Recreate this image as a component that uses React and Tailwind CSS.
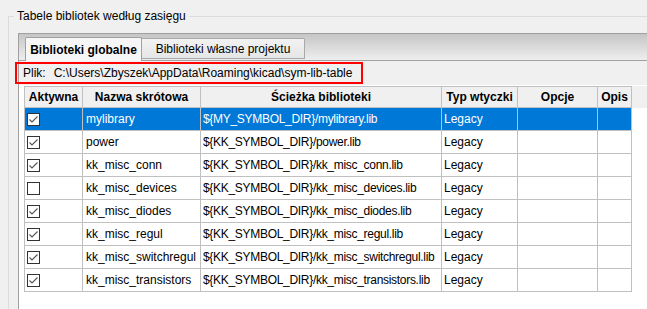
import React from 'react';

const rows = [
  { on: true, name: 'mylibrary', path: '${MY_SYMBOL_DIR}/mylibrary.lib', sel: true },
  { on: true, name: 'power', path: '${KK_SYMBOL_DIR}/power.lib' },
  { on: true, name: 'kk_misc_conn', path: '${KK_SYMBOL_DIR}/kk_misc_conn.lib' },
  { on: false, name: 'kk_misc_devices', path: '${KK_SYMBOL_DIR}/kk_misc_devices.lib' },
  { on: true, name: 'kk_misc_diodes', path: '${KK_SYMBOL_DIR}/kk_misc_diodes.lib' },
  { on: true, name: 'kk_misc_regul', path: '${KK_SYMBOL_DIR}/kk_misc_regul.lib' },
  { on: true, name: 'kk_misc_switchregul', path: '${KK_SYMBOL_DIR}/kk_misc_switchregul.lib' },
  { on: true, name: 'kk_misc_transistors', path: '${KK_SYMBOL_DIR}/kk_misc_transistors.lib' },
];

function Check({ on }) {
  return (
    <div className="w-[13px] h-[13px] border border-[#333] bg-white flex items-center justify-center">
      {on && (
        <svg width="11" height="11" viewBox="0 0 11 11">
          <polyline points="1.5,5.5 4,8 9.5,2.5" fill="none" stroke="#555" strokeWidth="1.1" />
        </svg>
      )}
    </div>
  );
}

export default function App() {
  const cell = 'border-r border-b border-[#c0c0c0] flex items-center whitespace-nowrap overflow-hidden';
  return (
    <div className="relative w-[647px] h-[309px] overflow-hidden bg-[#f0f0f0] text-[12px] text-black font-['Liberation_Sans',Arial,sans-serif]">
      <div className="pt-4 pl-2">
        {/* group box */}
        <div className="relative border-t border-l border-[#dcdcdc] h-[300px] pt-4 pl-[9px]">
          <div className="absolute left-[5px] -top-[9px] px-[3px] bg-[#f0f0f0] leading-[16px]">
            Tabele bibliotek według zasięgu
          </div>

          {/* notebook */}
          <div className="border-l border-[#a0a0a0] h-full">
            <div className="h-[28px] border-t border-b border-[#a0a0a0] bg-gradient-to-b from-[#c6c6c6] to-[#eeeeee] flex items-end pl-[6px]">
              <div className="w-[117px] h-[24px] -mb-px border border-b-0 border-[#a0a0a0] rounded-t-[2px] bg-[#f6f6f6] font-bold flex items-center justify-center">
                Biblioteki globalne
              </div>
              <div className="w-[163px] h-[21px] mb-px border border-l-0 border-[#a9a9a9] rounded-tr-[2px] bg-gradient-to-b from-[#f2f2f2] to-[#e6e6e6] flex items-center justify-center">
                Biblioteki własne projektu
              </div>
            </div>

            <div className="bg-[#f0f0f0]">
              <div className="h-[24px] flex items-center pl-[4px]">
                <span>Plik:</span>
                <span className="ml-[8px]">C:\Users\Zbyszek\AppData\Roaming\kicad\sym-lib-table</span>
              </div>

              <div className="bg-white pl-[5px] pt-px h-[230px]">
                <div className="flex">
                  <div className="flex border-l border-t border-[#c0c0c0] bg-[#f0f0f0] font-bold">
                    <div className={`${cell} w-[58px] h-[21px] justify-center`}>Aktywna</div>
                    <div className={`${cell} w-[118px] h-[21px] justify-center`}>Nazwa skrótowa</div>
                    <div className={`${cell} w-[241px] h-[21px] justify-center`}>Ścieżka biblioteki</div>
                    <div className={`${cell} w-[76px] h-[21px] justify-center`}>Typ wtyczki</div>
                    <div className={`${cell} w-[80px] h-[21px] justify-center`}>Opcje</div>
                    <div className={`${cell} w-[34px] h-[21px] justify-center`}>Opis</div>
                  </div>
                  <div className="flex-1 h-[22px] bg-[#f0f0f0]" />
                </div>
                <div className="border-l border-[#c0c0c0] w-[608px]">
                  {rows.map((r) => (
                    <div key={r.name} className={`flex h-[23px] ${r.sel ? 'bg-[#0078d7] text-white' : ''}`}>
                      <div className={`${cell} w-[58px] pl-[2px]`}>
                        <Check on={r.on} />
                      </div>
                      <div className={`${cell} w-[118px] pl-[3px]`}>{r.name}</div>
                      <div className={`${cell} w-[241px] pl-[2px] tracking-[-0.3px]`}>{r.path}</div>
                      <div className={`${cell} w-[76px] pl-[2px]`}>Legacy</div>
                      <div className={`${cell} w-[80px]`} />
                      <div className={`${cell} w-[34px]`} />
                    </div>
                  ))}
                </div>
              </div>
            </div>
          </div>
        </div>
      </div>

      {/* red annotation frame */}
      <div className="absolute left-[15px] top-[62px] w-[348px] h-[22px] border-2 border-[#ff0000]" />
    </div>
  );
}
